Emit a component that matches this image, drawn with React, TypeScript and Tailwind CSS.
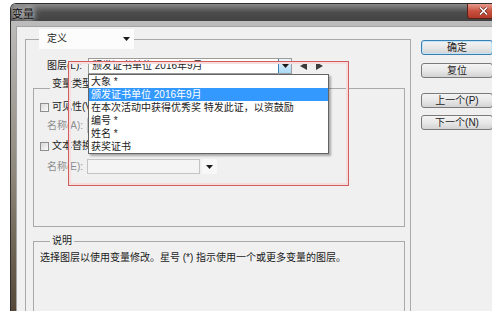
import React from 'react'

function Down({ className = '' }: { className?: string }) {
  return (
    <svg width="7" height="4" viewBox="0 0 7 4" className={className}>
      <path d="M0 0H7L3.5 4Z" fill="#1a1a1a" />
    </svg>
  )
}

function Tri({ dir }: { dir: 'left' | 'right' }) {
  return (
    <svg width="7" height="8" viewBox="0 0 7 8">
      <path d={dir === 'left' ? 'M7 0V8L0 4Z' : 'M0 0V8L7 4Z'} fill="#3b3b3b" />
    </svg>
  )
}

function Check({ label }: { label: string }) {
  return (
    <div className="flex items-center h-[12px] ml-[6px] gap-[3px]">
      <span className="w-[9px] h-[9px] border border-[#8e8f8f] bg-gradient-to-br from-[#d8d8d8] to-[#fbfbfb]" />
      <span className="whitespace-nowrap">{label}</span>
    </div>
  )
}

function Btn({ label, primary = false, className = '' }: { label: string; primary?: boolean; className?: string }) {
  return (
    <div
      className={`h-[15px] rounded-[3px] border text-center leading-[13px] bg-gradient-to-b from-[#f4f4f4] via-[#e8e8e8] to-[#d3d3d3] ${
        primary ? 'border-[#3c7fb1] shadow-[inset_0_0_0_1px_#bfe3f8]' : 'border-[#7a7a7a]'
      } ${className}`}
    >
      {label}
    </div>
  )
}

const items = ['大象 *', '颁发证书单位 2016年9月', '在本次活动中获得优秀奖 特发此证，以资鼓励', '编号 *', '姓名 *', '获奖证书']

export default function App() {
  return (
    <div className="relative w-[492px] h-[311px] overflow-hidden bg-white font-['Liberation_Sans','Noto_Sans_CJK_SC',sans-serif] text-[10px] leading-[12px] text-[#1b1b1b]">
      <div className="ml-[10px] mt-[3px] w-[500px] h-[320px] flex flex-col rounded-tl-[6px] overflow-hidden border-l border-t border-[#2e2e2e]">
        {/* title bar */}
        <div className="h-[21px] flex items-start justify-between bg-gradient-to-b from-[#8a8a8a] via-[#4c4c4c] to-[#424242]">
          <span className="mt-[4px] ml-[1px] text-[11px] leading-[13px] text-[#111] [text-shadow:0_0_5px_#fff,0_0_9px_#e8e8e8]">变量</span>
          <div className="mr-[11px] w-[32px] h-[15px] rounded-b-[3px] border border-t-0 border-[#5a2019] bg-gradient-to-b from-[#e49a8c] via-[#c9503f] to-[#b23a27] flex items-center justify-center">
            <svg width="9" height="8" viewBox="0 0 9 8">
              <path d="M1 0.5L8 7.5M8 0.5L1 7.5" stroke="#4a1a14" strokeWidth="2.6" />
              <path d="M1 0.5L8 7.5M8 0.5L1 7.5" stroke="#fff" strokeWidth="1.6" />
            </svg>
          </div>
        </div>

        {/* frame + client area */}
        <div className="flex-1 pl-[5px] pt-[5px] bg-gradient-to-b from-[#bcbcbc] via-[#8e877a] to-[#4d4030]">
          <div className="h-full flex items-start bg-[#f0f0f0] border-l border-t border-[#a3a3a3]">
            {/* left panel */}
            <fieldset className="ml-[8px] mt-[2px] w-[386px] h-[300px] shrink-0 border border-[#a9a9a9]">
              <legend className="ml-[13px] w-[95px] h-[20px] bg-[#fcfcfc] flex items-center justify-between pl-[8px] pr-[4px]">
                <span>定义</span>
                <Down />
              </legend>

              <div className="mt-[9px] flex items-center h-[16px]">
                <span className="ml-[21px] w-[41px]">图层(L):</span>
                <div className="relative w-[204px] h-[16px] border border-[#9c9c9c] bg-white flex items-center">
                  <span className="pl-[3px]">颁发证书单位 2016年9月</span>
                  <div className="ml-auto w-[13px] h-full border-l border-[#3c7fb1] bg-gradient-to-b from-[#eaf6fd] to-[#a9d9f4] flex items-center justify-center">
                    <Down />
                  </div>
                  {/* open dropdown list */}
                  <div className="absolute left-[-1px] top-[15px] z-10 w-[241px] border border-[#646464] bg-white shadow-[2px_2px_2px_rgba(0,0,0,0.3)]">
                    {items.map((t, i) => (
                      <div key={t} className={`h-[13px] pl-[2px] leading-[13px] whitespace-nowrap ${i === 1 ? 'bg-[#3399ff] text-white' : ''}`}>
                        {t}
                      </div>
                    ))}
                  </div>
                </div>
                <div className="ml-[8px] flex items-center gap-[9px]">
                  <Tri dir="left" />
                  <Tri dir="right" />
                </div>
              </div>

              <fieldset className="mt-[4px] ml-[7px] w-[372px] h-[149px] border border-[#a9a9a9]">
                <legend className="ml-[16px] px-[2px] pb-[8px]">变量类型</legend>
                <div className="mt-[3px]">
                  <Check label="可见性(V)" />
                </div>
                <div className="mt-[5px] flex items-center h-[15px]">
                  <span className="ml-[13px] w-[40px] text-[#8d8d8d]">名称(A):</span>
                  <div className="w-[113px] h-[15px] border border-[#c3c3c3] bg-[#f4f4f4]" />
                </div>
                <div className="mt-[7px]">
                  <Check label="文本替换(T)" />
                </div>
                <div className="mt-[7px] flex items-center h-[15px]">
                  <span className="ml-[13px] w-[40px] text-[#8d8d8d]">名称(E):</span>
                  <div className="w-[113px] h-[15px] border border-[#c3c3c3] bg-[#f4f4f4]" />
                  <div className="ml-[2px] w-[15px] h-[15px] bg-[#f8f8f8] flex items-center justify-center">
                    <Down />
                  </div>
                </div>
              </fieldset>

              <fieldset className="mt-[8px] ml-[7px] w-[372px] h-[100px] border border-[#a9a9a9]">
                <legend className="ml-[16px] px-[2px]">说明</legend>
                <p className="mt-[5px] ml-[6px] whitespace-nowrap">选择图层以使用变量修改。星号 (*) 指示使用一个或更多变量的图层。</p>
              </fieldset>
            </fieldset>

            {/* buttons */}
            <div className="ml-[10px] mt-[13px] w-[72px] shrink-0 flex flex-col">
              <Btn label="确定" primary />
              <Btn label="复位" className="mt-[8px]" />
              <Btn label="上一个(P)" className="mt-[15px]" />
              <Btn label="下一个(N)" className="mt-[7px]" />
            </div>
          </div>
        </div>
      </div>

      {/* red annotation frame */}
      <div className="absolute left-[68px] top-[61px] w-[281px] h-[125px] z-20 pointer-events-none border border-[#cf5f5f] shadow-[inset_0_0_0_2px_#f6dcdc]" />
    </div>
  )
}
